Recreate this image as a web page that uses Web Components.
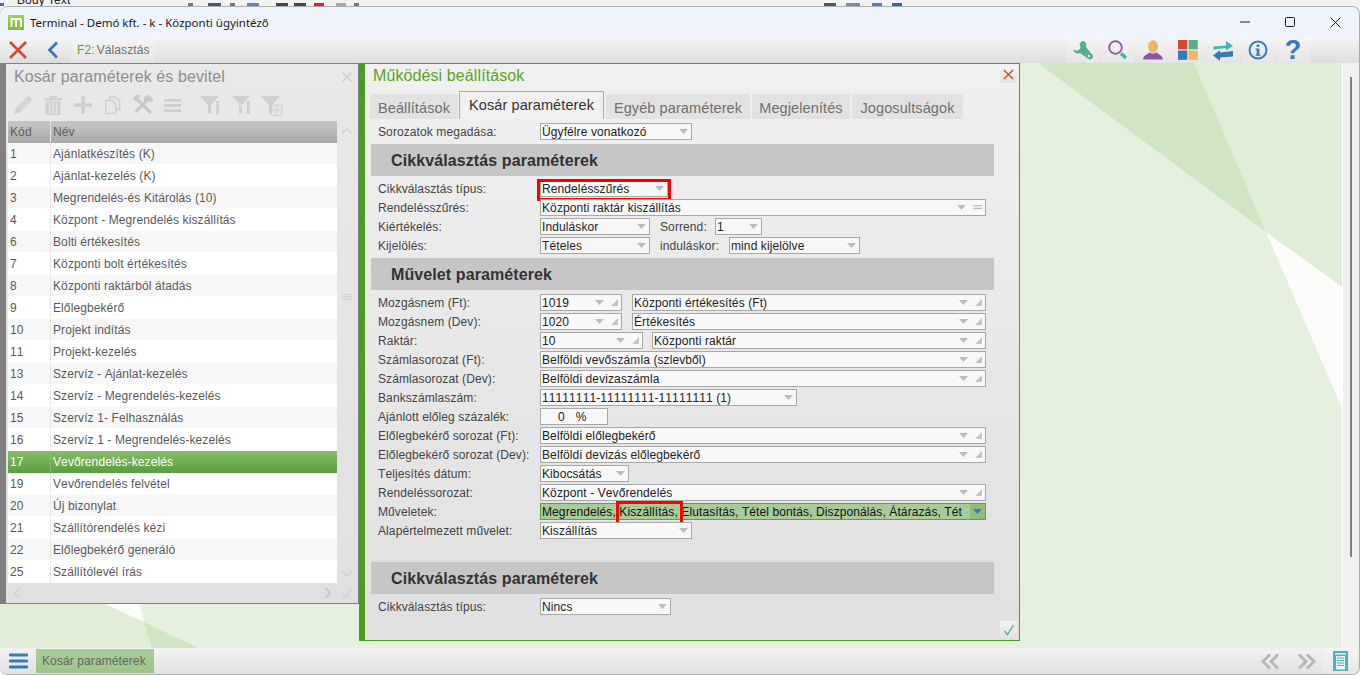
<!DOCTYPE html>
<html lang="hu">
<head>
<meta charset="utf-8">
<title>Terminal</title>
<style>
  html, body { margin: 0; height: 100%; overflow: hidden; background: #f3f3f3; }
  body { font: 12px "Liberation Sans", Arial, sans-serif; font-kerning: none; letter-spacing: .1px; }
</style>
</head>
<body>
<terminal-app>
  <desk-strip slot="strip"></desk-strip>
  <title-bar slot="title" caption="Terminal - Demó kft. - k - Központi ügyintéző"></title-bar>
  <tool-bar slot="tools"></tool-bar>
  <list-panel slot="left" caption="Kosár paraméterek és bevitel"></list-panel>
  <form-panel slot="right" caption="Működési beállítások">
    <tab-item slot="tabs" w="88" style="margin-right:2px">Beállítások</tab-item>
    <tab-item slot="tabs" w="145" active>Kosár paraméterek</tab-item>
    <tab-item slot="tabs" w="144">Egyéb paraméterek</tab-item>
    <tab-item slot="tabs" w="98">Megjelenítés</tab-item>
    <tab-item slot="tabs" w="111">Jogosultságok</tab-item>

    <form-row label="Sorozatok megadása:"><select-field w="152" value="Ügyfélre vonatkozó"></select-field></form-row>
    <section-bar>Cikkválasztás paraméterek</section-bar>
    <form-row label="Cikkválasztás típus:">
      <select-field w="128" value="Rendelésszűrés"><mark-box style="left:-4px;top:-2px;width:134px;height:22px"></mark-box></select-field>
    </form-row>
    <form-row label="Rendelésszűrés:"><select-field w="446" value="Központi raktár kiszállítás" eq></select-field></form-row>
    <form-row label="Kiértékelés:">
      <select-field w="110" value="Induláskor"></select-field>
      <form-text style="margin-left:10px;width:55px">Sorrend:</form-text>
      <select-field w="47" value="1"></select-field>
    </form-row>
    <form-row label="Kijelölés:">
      <select-field w="110" value="Tételes"></select-field>
      <form-text style="margin-left:10px;width:69px">induláskor:</form-text>
      <select-field w="131" value="mind kijelölve"></select-field>
    </form-row>
    <section-bar>Művelet paraméterek</section-bar>
    <form-row label="Mozgásnem (Ft):">
      <select-field w="82" value="1019" corner></select-field>
      <select-field w="354" style="margin-left:10px" value="Központi értékesítés (Ft)" corner></select-field>
    </form-row>
    <form-row label="Mozgásnem (Dev):">
      <select-field w="82" value="1020" corner></select-field>
      <select-field w="354" style="margin-left:10px" value="Értékesítés" corner></select-field>
    </form-row>
    <form-row label="Raktár:">
      <select-field w="103" value="10" corner></select-field>
      <select-field w="334" style="margin-left:9px" value="Központi raktár" corner></select-field>
    </form-row>
    <form-row label="Számlasorozat (Ft):"><select-field w="446" value="Belföldi vevőszámla (szlevből)" corner></select-field></form-row>
    <form-row label="Számlasorozat (Dev):"><select-field w="446" value="Belföldi devizaszámla" corner></select-field></form-row>
    <form-row label="Bankszámlaszám:"><select-field w="257" value="11111111-11111111-11111111 (1)"></select-field></form-row>
    <form-row label="Ajánlott előleg százalék:"><select-field w="68" value="0" plain unit="%"></select-field></form-row>
    <form-row label="Előlegbekérő sorozat (Ft):"><select-field w="446" value="Belföldi előlegbekérő" corner></select-field></form-row>
    <form-row label="Előlegbekérő sorozat (Dev):"><select-field w="446" value="Belföldi devizás előlegbekérő" corner></select-field></form-row>
    <form-row label="Teljesítés dátum:"><select-field w="89" value="Kibocsátás"></select-field></form-row>
    <form-row label="Rendeléssorozat:"><select-field w="446" value="Központ - Vevőrendelés" corner></select-field></form-row>
    <form-row label="Műveletek:">
      <select-field w="446" green value="Megrendelés, Kiszállítás, Elutasítás, Tétel bontás, Diszponálás, Átárazás, Tét"><mark-box style="left:75px;top:-3px;width:67px;height:25px"></mark-box></select-field>
    </form-row>
    <form-row label="Alapértelmezett művelet:"><select-field w="152" value="Kiszállítás"></select-field></form-row>
    <section-bar style="margin-top:21px">Cikkválasztás paraméterek</section-bar>
    <form-row label="Cikkválasztás típus:"><select-field w="131" value="Nincs"></select-field></form-row>
  </form-panel>
  <status-bar slot="status"></status-bar>
</terminal-app>

<script>
const BLUE = "#3a78b8", RED = "#d24a2f", GREEN = "#57b08c", TEAL = "#45b3b3", PURPLE = "#8e52a8", ORANGE = "#ecb866";

// every icon has its own viewBox, sized 1:1 in px unless the size attribute says otherwise
const ICONS = {
  close: `<svg viewBox="0 0 18 18"><path d="M1 1 17 17M17 1 1 17" stroke="${RED}" stroke-width="2.6" fill="none"/></svg>`,
  back: `<svg viewBox="0 0 12 18"><path d="M10 1.5 2.5 9l7.5 7.500" stroke="${BLUE}" stroke-width="2.8" fill="none"/></svg>`,
  wrench: `<svg viewBox="0 0 20 20"><path fill="${GREEN}" d="M9.500 .8C12.500 1 14 4 13 7l6.500 8c1 1.500 0 4.500-2.500 4.500L15.500 19 7 13C4 14.500 1 13 .3 9.500L4.500 11l3-3-1-4.500Z"/><circle cx="16" cy="16" r="1.200" fill="#eee"/></svg>`,
  search: `<svg viewBox="0 0 20 20"><circle cx="7.500" cy="7.500" r="6.300" fill="none" stroke="${PURPLE}" stroke-width="1.800"/><path d="M13 13.500 18 18" stroke="${TEAL}" stroke-width="3.600"/></svg>`,
  person: `<svg viewBox="0 0 20 20"><ellipse cx="10" cy="6.500" rx="5" ry="6.300" fill="${ORANGE}"/><path fill="${PURPLE}" d="M0 19.500C.5 15.500 4 14.500 6.500 12.500c2 1.500 5 1.500 7 0 2.500 2 6 3 6.500 7Z"/></svg>`,
  tiles: `<svg viewBox="0 0 20 20"><rect width="9.300" height="9.300" fill="${RED}"/><rect x="10.500" width="9.300" height="9.300" fill="${GREEN}"/><rect y="10.500" width="9.300" height="9.300" fill="${BLUE}"/><rect x="10.500" y="10.500" width="9.300" height="9.300" fill="${ORANGE}"/></svg>`,
  swap: `<svg viewBox="0 0 21 21"><path fill="${TEAL}" d="M.5 6.500 13 5.500V1l7 5-7 4.500V8L.5 9.500Z"/><path fill="${BLUE}" d="M20 11 7 12.500V10L0 15.500 7 21v-3.500l13-1Z"/></svg>`,
  info: `<svg viewBox="0 0 20 20"><circle cx="10" cy="10" r="8.500" fill="none" stroke="${BLUE}" stroke-width="2"/><rect x="8.700" y="4.500" width="2.600" height="2.500" fill="${BLUE}"/><path fill="${BLUE}" d="M7.500 8.500h3.800v6h1.200v1.300h-5v-1.300h1.200V9.800H7.500Z"/></svg>`,
  burger: `<svg viewBox="0 0 19 16"><path d="M1 2h17M1 8h17M1 14h17" stroke="${BLUE}" stroke-width="2.800" stroke-linecap="round"/></svg>`,
  doc: `<svg viewBox="0 0 15 20"><rect width="15" height="20" fill="#4db3b8"/><rect x="2" y="2" width="11" height="1.600" fill="#d8eeee"/><rect x="3" y="5" width="9" height="13.500" fill="#eaf5f5"/><path d="M4 7h7M4 9.500h7M4 12h7M4 14.500h7" stroke="#4db3b8" stroke-width="1.200"/></svg>`,
  rewind: `<svg viewBox="0 0 20 16"><path d="M9 1 2 8l7 7M17 1l-7 7 7 7" stroke="#b8b8b8" stroke-width="3" fill="none"/></svg>`,
  forward: `<svg viewBox="0 0 20 16"><path d="M3 1l7 7-7 7M11 1l7 7-7 7" stroke="#b8b8b8" stroke-width="3" fill="none"/></svg>`,
  check: `<svg viewBox="0 0 12 12"><path d="M1.500 7 4.500 10.500 10.500 1" stroke="${GREEN}" stroke-width="1.400" fill="none"/></svg>`,
  // faded ones of the disabled list panel
  pencil: `<svg viewBox="0 0 20 20"><path fill="#cfcfcf" d="M1 19.500 3 13 13.500 2.500c1.500-1.500 3-1 4 0s1.500 2.500 0 4L7 17Z"/><path d="M5 13.500 14.500 4M7 15l9.500-9.500" stroke="#e6e6e6"/></svg>`,
  trash: `<svg viewBox="0 0 20 20"><path fill="#cfcfcf" d="M1 3h18v2.500H1ZM6.500 1h7v2h-7ZM2.500 6.500h15V20h-15Z"/><path d="M6.500 8v10.500M10 8v10.500M13.500 8v10.500" stroke="#e6e6e6" stroke-width="1.300"/></svg>`,
  plus: `<svg viewBox="0 0 20 20"><path d="M1 10h18M10 1v18" stroke="#cfcfcf" stroke-width="3.400"/></svg>`,
  copy: `<svg viewBox="0 0 18 20"><path fill="none" stroke="#cfcfcf" stroke-width="1.600" d="M5.500 5V1h6l5 4.500V15h-4M1 5h7l4 4v10.500H1Z"/></svg>`,
  tools: `<svg viewBox="0 0 22 22"><path d="M6 6 19 19" stroke="#c9c9c9" stroke-width="3.200"/><path fill="#c9c9c9" d="M1 5C2 1 6 0 9 1L6.500 4 8 6.500 5.500 8 3 6.500Z"/><path d="M16 5 3.500 18" stroke="#c9c9c9" stroke-width="3.200"/><path fill="#c9c9c9" d="M12 3l4-2.500 5.500 5-2 3-2-2L14.500 9 12 6.500Z"/></svg>`,
  bars: `<svg viewBox="0 0 20 16"><path d="M1 2.500h18M1 8h18M1 13.500h18" stroke="#cfcfcf" stroke-width="3"/></svg>`,
  funnelA: `<svg viewBox="0 0 20 20"><path fill="#cfcfcf" d="M0 1h19L11 10v8.500H8V10Z"/><path d="M17.500 6v13" stroke="#cfcfcf" stroke-width="3"/><path d="M16 9h2M16 12h2M16 15h2" stroke="#e6e6e6"/></svg>`,
  funnelB: `<svg viewBox="0 0 20 20"><path fill="#cfcfcf" d="M0 1h19L11 10v8.500H8V10Z"/><path d="M0 1l18 18" stroke="#e6e6e6" stroke-width="1.500"/><path d="M17.500 6v13" stroke="#cfcfcf" stroke-width="3"/></svg>`,
  funnelC: `<svg viewBox="0 0 22 21"><path fill="#cfcfcf" d="M0 1h19L11 10v8.500H8V10Z"/><rect x="10.500" y="10" width="10.500" height="10.500" fill="#e6e6e6" stroke="#cfcfcf"/><path d="M15.700 11v8.500M11 15.200h9.500" stroke="#cfcfcf"/></svg>`,
  chevUp: `<svg viewBox="0 0 12 8"><path d="M1 6.500 6 2l5 4.500" stroke="#cfcfcf" stroke-width="1.300" fill="none"/></svg>`,
  chevDown: `<svg viewBox="0 0 12 8"><path d="M1 1.500 6 6l5-4.500" stroke="#cfcfcf" stroke-width="1.300" fill="none"/></svg>`,
  chevLeft: `<svg viewBox="0 0 8 12"><path d="M6.500 1 2 6l4.500 5" stroke="#cfcfcf" stroke-width="1.300" fill="none"/></svg>`,
  chevRight: `<svg viewBox="0 0 8 12"><path d="M1.500 1 6 6l-4.500 5" stroke="#bdbdbd" stroke-width="1.300" fill="none"/></svg>`,
  grip: `<svg viewBox="0 0 12 8"><path d="M1 1.500h10M1 4h10M1 6.500h10" stroke="#cfcfcf"/></svg>`,
  checkDim: `<svg viewBox="0 0 12 12"><path d="M1.500 7 4.500 10.500 10.500 1" stroke="#cfcfcf" stroke-width="1.300" fill="none"/></svg>`,
  closeDim: `<svg viewBox="0 0 12 12"><path d="M1.500 1.500l9 9M10.500 1.500l-9 9" stroke="#cfcfcf" stroke-width="1.500" fill="none"/></svg>`,
  closeThin: `<svg viewBox="0 0 12 12"><path d="M1 1l10 10M11 1 1 11" stroke="${RED}" stroke-width="1.500" fill="none"/></svg>`,
};

class BaseElement extends HTMLElement {
  constructor() {
    super();
    this.attachShadow({ mode: "open" });
  }

  connectedCallback() {
    this.render();
  }

  attr(name, fallback = "") {
    return this.hasAttribute(name) ? this.getAttribute(name) : fallback;
  }
}

class AppIcon extends BaseElement {
  render() {
    const w = this.attr("w", 20), h = this.attr("h", w);
    this.shadowRoot.innerHTML = `
      <style>
        :host { display: inline-flex; flex: none; width: ${w}px; height: ${h}px; }
        svg { display: block; width: 100%; height: 100%; }
      </style>${ICONS[this.attr("name")]}`;
  }
}

class TerminalApp extends BaseElement {
  render() {
    this.shadowRoot.innerHTML = `
      <style>
        :host { display: flex; flex-direction: column; width: 1360px; height: 675px; color: #444; }
        .window {
          display: flex; flex-direction: column; height: 669px; box-sizing: border-box;
          border: 1px solid #adadad; border-left: 0; border-radius: 8px;
          overflow: hidden; background: #e5f0df;
        }
        .work { position: relative; display: flex; flex: 1; min-height: 0; align-items: flex-start; }
        .back { position: absolute; left: 0; top: 0; width: 1342px; height: 585px; }
        .panels { position: relative; display: flex; flex: 1; align-items: flex-start; }
        .scroll {
          position: relative; flex: none; width: 17px; align-self: stretch; height: 585px; box-sizing: border-box;
          border-left: 1px solid #fff; background: #f0f0f0; padding: 14px 0 0 7px;
        }
        .thumb { width: 2px; height: 480px; background: #808080; }
      </style>
      <slot name="strip"></slot>
      <div class="window">
        <slot name="title"></slot>
        <slot name="tools"></slot>
        <div class="work">
          <svg class="back" viewBox="0 63 1342 585">
            <polygon fill="#cfe5c4" points="1038,63 1194,63 1266,232"/>
            <polygon fill="#e1eed7" points="1194,63 1342,63 1342,287 1266,232"/>
            <polygon fill="#fcfdfb" points="1266,232 1342,287 1342,408"/>
            <polygon fill="#e1edd6" points="0,604 105,604 144,622 152,648 0,648"/>
            <polygon fill="#fcfdfb" points="105,604 140,604 144,622"/>
            <polygon fill="#cfe5c4" points="144,622 198,648 152,648"/>
          </svg>
          <div class="panels"><slot name="left"></slot><slot name="right"></slot></div>
          <div class="scroll"><div class="thumb"></div></div>
        </div>
        <slot name="status"></slot>
      </div>`;
  }
}

// the part of the word processor behind the window that still shows above it
class DeskStrip extends BaseElement {
  render() {
    const bit = (x, w, c) => `<i style="margin-left:${x}px;width:${w}px;background:${c}"></i>`;
    this.shadowRoot.innerHTML = `
      <style>
        :host { display: flex; height: 6px; overflow: hidden; background: #f3f3f3; align-items: flex-end; }
        i { display: block; height: 3px; flex: none; }
        .t { flex: none; width: 171px; margin-left: 13px; font: 12px/12px "Liberation Sans", sans-serif; color: #222; height: 6px; }
        .t span { display: block; margin-top: -6px; }
      </style>
      ${bit(0, 4, BLUE)}
      <div class="t"><span>Body Text</span></div>
      ${bit(0, 5, "#777")}${bit(15, 13, "#3e5b80")}${bit(9, 5, "#777")}${bit(12, 12, "#5d86c0")}
      ${bit(17, 12, "#444")}${bit(6, 12, "#444")}${bit(8, 10, "#d22")}${bit(12, 10, "#aaa")}${bit(8, 5, "#777")}
      ${bit(465, 12, "#555")}${bit(10, 14, "#6a8fc0")}${bit(12, 10, "#4f7fb8")}${bit(10, 10, "#36a")}`;
  }
}

class TitleBar extends BaseElement {
  render() {
    this.shadowRoot.innerHTML = `
      <style>
        :host { display: flex; flex: none; height: 30px; align-items: center; background: #eff3fc; padding-left: 8px; }
        .logo { width: 16px; height: 15px; background: linear-gradient(#a4d44e, #7dbb3a); display: flex; align-items: center; justify-content: center; }
        .cap { margin-left: 6px; font: 11.5px "Noto Sans", "Open Sans", sans-serif; letter-spacing: 0; color: #1a1a1a; flex: 1; }
        .ctl { display: flex; }
        .ctl div { width: 45px; height: 30px; display: flex; align-items: center; justify-content: center; }
        svg { display: block; }
      </style>
      <div class="logo"><svg width="12" height="10" viewBox="0 0 12 10"><path d="M1.500 10V2h8.500c1 0 1 1 1 1.500V10M6 3v7" stroke="#fff" stroke-width="2" fill="none"/></svg></div>
      <div class="cap">${this.attr("caption")}</div>
      <div class="ctl">
        <div><svg width="10" height="2"><path d="M0 1h10" stroke="#1a1a1a"/></svg></div>
        <div><svg width="10" height="10"><rect x=".5" y=".5" width="9" height="9" rx="1" fill="none" stroke="#1a1a1a"/></svg></div>
        <div style="width:47px"><svg width="11" height="11"><path d="M.5.5l10 10M10.500.5l-10 10" stroke="#1a1a1a"/></svg></div>
      </div>`;
  }
}

class ToolBar extends BaseElement {
  render() {
    const sets = [["wrench", 20], ["search", 20], ["person", 20], ["tiles", 20], ["swap", 21], ["info", 20]];
    const btns = sets.map(([n, w]) => `<div class="b"><app-icon name="${n}" w="${w}"></app-icon></div>`).join("");
    this.shadowRoot.innerHTML = `
      <style>
        :host {
          display: flex; flex: none; height: 26px; align-items: stretch;
          background: linear-gradient(#f4f4f4, #dedede);
        }
        .b {
          display: flex; align-items: center; justify-content: center; width: 34px; margin-right: 1px;
          background: linear-gradient(#f5f5f5, #e4e4e4);
        }
        .x { width: 35px; margin-right: 0; background: none; }
        .bk { width: 35px; margin-right: 1px; background: none; }
        .f { width: 84px; box-sizing: border-box; padding-left: 6px; display: flex; align-items: center; font-size: 12px; color: #707070; background: linear-gradient(#f5f5f5, #e4e4e4); }
        .f b { font-weight: normal; color: #5aa520; margin-right: 2px; }
        .gap { flex: 1; }
        .help { font: bold 27px/26px "Liberation Sans", sans-serif; color: ${BLUE}; }
      </style>
      <div class="b x"><app-icon name="close" w="18"></app-icon></div>
      <div class="b bk"><app-icon name="back" w="12" h="18"></app-icon></div>
      <div class="f"><b>F2:</b>Választás</div>
      <div class="gap"></div>
      ${btns}
      <div class="b help">?</div>
      <div style="width:48px"></div>`;
  }
}

const LIST_ROWS = [
  [1, "Ajánlatkészítés (K)"], [2, "Ajánlat-kezelés (K)"], [3, "Megrendelés-és Kitárolás (10)"],
  [4, "Központ - Megrendelés kiszállítás"], [6, "Bolti értékesítés"], [7, "Központi bolt értékesítés"],
  [8, "Központi raktárból átadás"], [9, "Előlegbekérő"], [10, "Projekt indítás"], [11, "Projekt-kezelés"],
  [13, "Szervíz - Ajánlat-kezelés"], [14, "Szervíz - Megrendelés-kezelés"], [15, "Szervíz 1- Felhasználás"],
  [16, "Szervíz 1 - Megrendelés-kezelés"], [17, "Vevőrendelés-kezelés"], [19, "Vevőrendelés felvétel"],
  [20, "Új bizonylat"], [21, "Szállítórendelés kézi"], [22, "Előlegbekérő generáló"], [25, "Szállítólevél írás"],
];

class ListPanel extends BaseElement {
  render() {
    const rows = LIST_ROWS.map(([code, name], i) => `
      <div class="row ${code === 17 ? "sel" : i % 2 ? "even" : ""}"><span>${code}</span><span>${name}</span></div>`).join("");
    const tool = (name, w, h, width) => `<div class="t" style="width:${width}px"><app-icon name="${name}" w="${w}" h="${h}"></app-icon></div>`;
    this.shadowRoot.innerHTML = `
      <style>
        :host {
          display: flex; flex-direction: column; flex: none; width: 359px; height: 541px; box-sizing: border-box;
          border: solid #808080; border-width: 1px 1px 1px 6px;
          background: linear-gradient(#e9e9e9, #e0e0e0);
        }
        .head { display: flex; align-items: center; justify-content: space-between; height: 25px; padding: 0 5px 0 8px; flex: none; }
        h1 { margin: 0; font: 16px "Liberation Sans", sans-serif; color: #8f8f8f; }
        .tools { display: flex; align-items: center; height: 32px; padding-left: 1px; flex: none; }
        .t { display: flex; justify-content: center; flex: none; }
        .body { display: flex; margin-left: 2px; flex: none; }
        .table { width: 329px; flex: none; }
        .cols, .row { display: grid; grid-template-columns: 42px 1fr; }
        .cols { height: 22px; background: linear-gradient(#c6c6c6, #a9a9a9); color: #5e5e5e; }
        .cols span, .row span { display: flex; align-items: center; padding-left: 2px; }
        .cols span + span, .row span + span { border-left: 1px solid #e6e6e6; padding-left: 2px; }
        .row { height: 22px; box-sizing: border-box; background: #f7f7f7; color: #5a5a5a; border-bottom: 1px solid #fff; }
        .row.even { background: #fff; }
        .row.sel { background: linear-gradient(#85bc6c, #5d9e40); color: #fff; border-bottom-color: #5d9e40; }
        .row.sel span + span { border-left-color: #85bc6c; }
        .bar { display: flex; flex-direction: column; align-items: center; width: 18px; margin-left: 1px; padding-top: 6px; }
        .foot { display: flex; align-items: center; padding: 4px 5px 0 7px; }
        .foot .sp { flex: 1; }
      </style>
      <div class="head"><h1>${this.attr("caption")}</h1><app-icon name="closeDim" w="12"></app-icon></div>
      <div class="tools">
        ${tool("pencil", 20, 20, 31)}${tool("trash", 20, 20, 29)}${tool("plus", 20, 20, 31)}${tool("copy", 16, 20, 29)}
        ${tool("tools", 22, 22, 31)}${tool("bars", 19, 15, 29)}<div style="width:6px"></div>
        ${tool("funnelA", 20, 20, 33)}${tool("funnelB", 20, 20, 30)}${tool("funnelC", 22, 21, 32)}
      </div>
      <div class="body">
        <div class="table">
          <div class="cols"><span>Kód</span><span>Név</span></div>
          ${rows}
        </div>
        <div class="bar">
          <app-icon name="chevUp" w="12" h="8"></app-icon>
          <app-icon name="grip" w="12" h="8" style="margin-top:158px"></app-icon>
          <app-icon name="chevDown" w="12" h="8" style="margin-top:269px"></app-icon>
        </div>
      </div>
      <div class="foot">
        <app-icon name="chevLeft" w="8" h="12"></app-icon><div class="sp"></div>
        <app-icon name="chevRight" w="8" h="12"></app-icon>
        <app-icon name="checkDim" w="12" style="margin-left:9px"></app-icon>
      </div>`;
  }
}

class FormPanel extends BaseElement {
  render() {
    this.shadowRoot.innerHTML = `
      <style>
        :host {
          display: flex; flex-direction: column; flex: none; width: 661px; height: 578px; box-sizing: border-box;
          border: solid #4a9e1f; border-width: 1px 1px 1px 6px;
          background: linear-gradient(#f0f0f0, #e0e0e0);
        }
        .head { display: flex; height: 27px; justify-content: space-between; padding: 0 2px 0 8px; flex: none; }
        h1 { margin: 0; font: 16px/24px "Liberation Sans", sans-serif; color: #5aa520; }
        .x {
          width: 17px; height: 17px; margin-top: 2px; display: flex; align-items: center; justify-content: center;
          background: linear-gradient(#f2f2f2, #e2e2e2);
        }
        .tabs { display: flex; align-items: flex-end; padding-left: 5px; height: 28px; flex: none; }
        .form { display: flex; flex-direction: column; gap: 2px; padding: 4px 25px 0 6px; }
        .foot { margin-top: auto; display: flex; justify-content: flex-end; padding: 0 2px 2px 0; }
        .ok {
          width: 17px; height: 17px; display: flex; align-items: center; justify-content: center;
          background: linear-gradient(#f2f2f2, #e4e4e4);
        }
      </style>
      <div class="head"><h1>${this.attr("caption")}</h1><div class="x"><app-icon name="closeThin" w="11"></app-icon></div></div>
      <div class="tabs"><slot name="tabs"></slot></div>
      <div class="form"><slot></slot></div>
      <div class="foot"><div class="ok"><app-icon name="check" w="12"></app-icon></div></div>`;
  }
}

class TabItem extends BaseElement {
  render() {
    const active = this.hasAttribute("active");
    this.shadowRoot.innerHTML = `
      <style>
        :host {
          display: flex; box-sizing: border-box; width: ${this.attr("w")}px; height: ${active ? 28 : 25}px;
          margin: ${active ? "0 2px 0 -1px" : "0 2px 0 0"}; justify-content: center; align-items: ${active ? "flex-start" : "center"};
          font: 14.5px/16px "Liberation Sans", sans-serif; white-space: nowrap;
          background: ${active ? "#f0f0f0" : "#e2e2e2"}; color: ${active ? "#333" : "#707070"};
          ${active ? "border: 1px solid #aaa; border-bottom: 0; padding-top: 5px;" : "padding-top: 2px;"}
        }
      </style><slot></slot>`;
  }
}

class SectionBar extends BaseElement {
  render() {
    this.shadowRoot.innerHTML = `
      <style>
        :host {
          display: flex; align-items: center; flex: none; box-sizing: border-box; height: 32px; margin: 2px 0; padding: 1px 0 0 20px;
          background: #c6c6c6; color: #333; font: bold 16px "Liberation Sans", sans-serif;
        }
      </style><slot></slot>`;
  }
}

class FormRow extends BaseElement {
  render() {
    this.shadowRoot.innerHTML = `
      <style>
        :host { display: flex; align-items: center; height: 17px; padding-left: 7px; flex: none; }
        .l { width: 162px; flex: none; color: #444; white-space: nowrap; }
        .f { display: flex; align-items: center; }
      </style>
      <div class="l">${this.attr("label")}</div><div class="f"><slot></slot></div>`;
  }
}

class FormText extends BaseElement {
  render() {
    this.shadowRoot.innerHTML = `<style>:host { display: block; flex: none; color: #444; white-space: nowrap; }</style><slot></slot>`;
  }
}

class SelectField extends BaseElement {
  render() {
    const green = this.hasAttribute("green"), corner = this.hasAttribute("corner"), eq = this.hasAttribute("eq");
    const plain = this.hasAttribute("plain");
    const arrow = c => `<svg width="9" height="5" viewBox="0 0 9 5"><path d="M0 0h9L4.500 5Z" fill="${c}"/></svg>`;
    let tail = arrow("#bdbdbd");
    if (corner) tail += `<svg class="end" width="7" height="7" viewBox="0 0 7 7"><path d="M7 0v7H0Z" fill="#c4c4c4"/></svg>`;
    if (eq) tail += `<svg class="end" width="9" height="5" viewBox="0 0 9 5"><path d="M0 .5h9M0 3.500h9" stroke="#bdbdbd" stroke-width="1.300"/></svg>`;
    const body = plain
      ? `<div class="v" style="padding-left:17px">${this.attr("value")}<span style="margin-left:11px">${this.attr("unit")}</span></div>`
      : `<div class="v">${this.attr("value")}</div>`;
    this.shadowRoot.innerHTML = `
      <style>
        :host {
          position: relative; display: flex; align-items: center; flex: none; box-sizing: border-box;
          width: ${this.attr("w")}px; height: 17px;
          border: 1px solid ${green ? "#5fa042" : "#a8a8a8"}; background: ${green ? "#a8cc98" : "#f8f8f8"};
          color: ${green ? "#111" : "#222"};
        }
        .v { flex: 1; min-width: 0; overflow: hidden; white-space: nowrap; padding-left: 1px; }
        .tail { display: flex; align-items: center; flex: none; padding: 0 3px 0 6px; }
        .tail .end { margin-left: 7px; }
        .btn { align-self: stretch; display: flex; align-items: center; justify-content: center; width: 15px; background: #8fbe7c; flex: none; margin-left: 7px; }
        svg { display: block; }
      </style>
      ${body}
      ${plain ? "" : green ? `<div class="btn">${arrow(BLUE)}</div>` : `<div class="tail">${tail}</div>`}
      <slot></slot>`;
  }
}

class MarkBox extends BaseElement {
  render() {
    this.shadowRoot.innerHTML = `<style>:host { position: absolute; box-sizing: border-box; border: 3px solid #f00; }</style>`;
  }
}

class StatusBar extends BaseElement {
  render() {
    this.shadowRoot.innerHTML = `
      <style>
        :host {
          display: flex; flex: none; height: 26px; align-items: center;
          background: linear-gradient(#f2f2f2, #e2e2e2);
        }
        .menu { display: flex; width: 36px; justify-content: center; }
        .tag {
          display: flex; align-items: center; height: 24px; width: 118px; box-sizing: border-box; padding-left: 6px;
          background: linear-gradient(#a9cd99, #9cc58a); color: #666; white-space: nowrap;
        }
        .gap { flex: 1; }
        .doc { display: flex; align-items: center; justify-content: center; width: 34px; height: 26px; background: linear-gradient(#f4f4f4, #e8e8e8); }
      </style>
      <div class="menu"><app-icon name="burger" w="19" h="16"></app-icon></div>
      <div class="tag">Kosár paraméterek</div>
      <div class="gap"></div>
      <app-icon name="rewind" w="20" h="17"></app-icon>
      <app-icon name="forward" w="20" h="17" style="margin:0 7px 0 15px"></app-icon>
      <div class="doc"><app-icon name="doc" w="15" h="20"></app-icon></div>
      <div style="width:2px"></div>`;
  }
}

const TAGS = {
  "app-icon": AppIcon, "terminal-app": TerminalApp, "desk-strip": DeskStrip, "title-bar": TitleBar,
  "tool-bar": ToolBar, "list-panel": ListPanel, "form-panel": FormPanel, "tab-item": TabItem,
  "section-bar": SectionBar, "form-row": FormRow, "form-text": FormText, "select-field": SelectField,
  "mark-box": MarkBox, "status-bar": StatusBar,
};
Object.entries(TAGS).forEach(([tag, cls]) => customElements.define(tag, cls));
</script>
</body>
</html>
